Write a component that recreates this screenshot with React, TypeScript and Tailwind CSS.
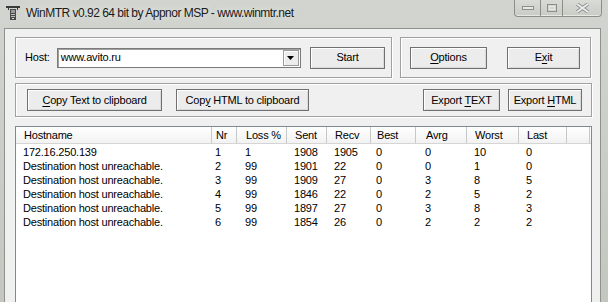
import React from 'react';

type Col = { label: string; w: number; pl: number };

const cols: Col[] = [
  { label: 'Hostname', w: 196, pl: 7 },
  { label: 'Nr', w: 25, pl: 3 },
  { label: 'Loss %', w: 50, pl: 8 },
  { label: 'Sent', w: 40, pl: 7 },
  { label: 'Recv', w: 44, pl: 7 },
  { label: 'Best', w: 45, pl: 5 },
  { label: 'Avrg', w: 51, pl: 9 },
  { label: 'Worst', w: 52, pl: 7 },
  { label: 'Last', w: 48, pl: 7 },
];

const rows: (string | number)[][] = [
  ['172.16.250.139', 1, 1, 1908, 1905, 0, 0, 10, 0],
  ['Destination host unreachable.', 2, 99, 1901, 22, 0, 0, 1, 0],
  ['Destination host unreachable.', 3, 99, 1909, 27, 0, 3, 8, 5],
  ['Destination host unreachable.', 4, 99, 1846, 22, 0, 2, 5, 2],
  ['Destination host unreachable.', 5, 99, 1897, 27, 0, 3, 8, 3],
  ['Destination host unreachable.', 6, 99, 1854, 26, 0, 2, 2, 2],
];

const Btn: React.FC<{ className?: string; children: React.ReactNode }> = ({ className, children }) => (
  <div
    className={`flex items-center justify-center h-[22px] border border-[#707070] bg-[#ececec] shadow-[inset_1px_1px_0_#ffffff,inset_-1px_-1px_0_#dadada] text-[11px] tracking-[-0.2px] leading-none text-black whitespace-nowrap ${className ?? ''}`}
  >
    <span>{children}</span>
  </div>
);

const U: React.FC<{ children: React.ReactNode }> = ({ children }) => (
  <span className="underline underline-offset-[2px]">{children}</span>
);

const Group: React.FC<{ className?: string; children: React.ReactNode }> = ({ className, children }) => (
  <div
    className={`flex items-center border border-[#a0a0a0] shadow-[1px_1px_0_#ffffff,inset_1px_1px_0_#ffffff] ${className ?? ''}`}
  >
    {children}
  </div>
);

const AppIcon = () => (
  <svg width="16" height="16" viewBox="0 0 16 16">
    <rect x="1" y="1" width="14" height="2" fill="#3a3a3a" />
    <rect x="3" y="3" width="1" height="2" fill="#3a3a3a" />
    <rect x="12" y="3" width="1" height="2" fill="#3a3a3a" />
    <rect x="5" y="4" width="6" height="11" fill="#4a4a4a" />
    <rect x="6" y="5" width="4" height="3" fill="#9a9a9a" />
    <rect x="6" y="9" width="4" height="1" fill="#bdbdbd" />
    <rect x="6" y="11" width="4" height="1" fill="#bdbdbd" />
    <rect x="7" y="13" width="2" height="1" fill="#d0d0d0" />
  </svg>
);

const CaptionButtons = () => (
  <div className="flex h-[17px] border border-t-0 border-[#8b8f88] rounded-b-[4px] bg-gradient-to-b from-[#d9dcd6] to-[#c8ccc5] shadow-[inset_0_-1px_0_#e6e8e3]">
    <div className="w-[26px] flex items-center justify-center border-r border-[#8b8f88]">
      <svg width="12" height="6" viewBox="0 0 12 6">
        <rect x="0.5" y="1.5" width="11" height="3" fill="#e8e8e8" stroke="#8d8d8d" />
      </svg>
    </div>
    <div className="w-[22px] flex items-center justify-center border-r border-[#8b8f88]">
      <svg width="10" height="8" viewBox="0 0 10 8">
        <rect x="0.5" y="0.5" width="9" height="7" fill="none" stroke="#8d8d8d" />
        <rect x="2.5" y="2.5" width="5" height="3" fill="none" stroke="#e8e8e8" />
      </svg>
    </div>
    <div className="w-[38px] flex items-center justify-center">
      <svg width="15" height="10" viewBox="0 0 15 10">
        <path d="M2 1 L13 9 M13 1 L2 9" stroke="#8d8d8d" strokeWidth="3.6" />
        <path d="M2 1 L13 9 M13 1 L2 9" stroke="#ececec" strokeWidth="1.8" />
      </svg>
    </div>
  </div>
);

export default function App() {
  return (
    <div className="w-[608px] h-[302px] overflow-hidden bg-gradient-to-b from-[#d2d5cf] to-[#c3c7c0] flex flex-col font-['Liberation_Sans',Arial,sans-serif] text-black">
      <div className="h-[28px] flex items-start pl-[5px] pr-[6px]">
        <div className="mt-[5px]">
          <AppIcon />
        </div>
        <div className="ml-[5px] mt-[5px] text-[12px] tracking-[-0.5px] leading-[16px] text-[#1a1a1a] whitespace-nowrap [text-shadow:0_0_6px_#ecece8]">
          WinMTR v0.92 64 bit by Appnor MSP - www.winmtr.net
        </div>
        <div className="ml-auto">
          <CaptionButtons />
        </div>
      </div>

      <div className="flex-1 ml-[4px] mr-[7px] bg-[#f0f0f0] border border-b-0 border-[#8f938c] flex flex-col pt-[8px] pl-[10px] pr-[8px] min-h-0 text-[11px] tracking-[-0.2px]">
        <div className="flex gap-[8px] h-[41px]">
          <Group className="w-[377px] pl-[9px] pr-[6px]">
            <span className="leading-none">Host:</span>
            <div className="ml-[7px] w-[244px] h-[20px] flex items-center bg-white border border-[#7a7a7a] shadow-[inset_1px_1px_0_#a0a0a0] relative">
              <span className="pl-[3px] leading-none">www.avito.ru</span>
              <div className="absolute right-[1px] top-[1px] bottom-[1px] w-[16px] flex items-center justify-center bg-[#ececec] border border-[#9a9a9a] shadow-[inset_1px_1px_0_#ffffff]">
                <svg width="7" height="4" viewBox="0 0 7 4">
                  <path d="M0 0 H7 L3.5 4 Z" fill="#000" />
                </svg>
              </div>
            </div>
            <Btn className="ml-auto w-[75px]">Start</Btn>
          </Group>
          <Group className="w-[191px] pl-[9px] pr-[10px] justify-between">
            <Btn className="w-[77px]">
              <U>O</U>ptions
            </Btn>
            <Btn className="w-[73px]">
              E<U>x</U>it
            </Btn>
          </Group>
        </div>

        <Group className="mt-[5px] h-[34px] pl-[11px] pr-[9px]">
          <Btn className="w-[135px]">
            <U>C</U>opy Text to clipboard
          </Btn>
          <Btn className="ml-[14px] w-[133px]">
            Cop<U>y</U> HTML to clipboard
          </Btn>
          <Btn className="ml-auto w-[77px]">
            Export <U>T</U>EXT
          </Btn>
          <Btn className="ml-[8px] w-[74px]">
            Export <U>H</U>TML
          </Btn>
        </Group>

        <div className="mt-[9px] flex-1 bg-white border border-[#828790] border-b-0 min-h-0 overflow-hidden">
          <div className="flex h-[17px] border-b border-[#d5d5d5] bg-gradient-to-b from-[#ffffff] to-[#f2f2f2]">
            {cols.map((c) => (
              <div
                key={c.label}
                className="shrink-0 h-full flex items-center border-r border-[#c8c8c8] leading-none whitespace-nowrap"
                style={{ width: c.w, paddingLeft: c.pl + 1 }}
              >
                {c.label}
              </div>
            ))}
            <div className="w-[23px] shrink-0 h-full border-r border-[#c8c8c8]" />
          </div>
          <div className="pt-[1px]">
            {rows.map((r, i) => (
              <div key={i} className="flex h-[14px] items-center">
                {r.map((v, j) => (
                  <div
                    key={j}
                    className="shrink-0 leading-none whitespace-nowrap"
                    style={{ width: cols[j].w, paddingLeft: cols[j].pl }}
                  >
                    {v}
                  </div>
                ))}
              </div>
            ))}
          </div>
        </div>
      </div>
    </div>
  );
}
